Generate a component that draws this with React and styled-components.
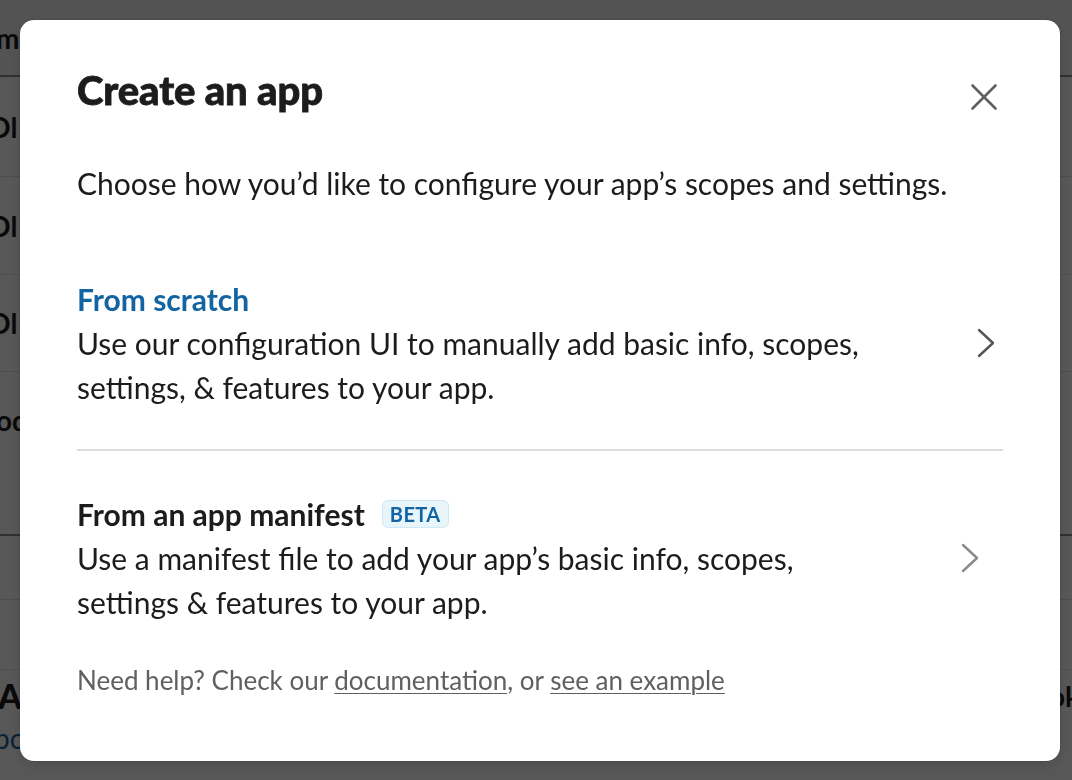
import React from "react";
import styled, { createGlobalStyle } from "styled-components";

const Global = createGlobalStyle`
  html, body { margin: 0; padding: 0; }
  body {
    font-family: Lato, "Noto Sans", sans-serif;
    background: #ffffff;
    overflow: hidden;
  }
  * { box-sizing: border-box; }
`;

/* ---------- background page ---------- */
const Page = styled.div`
  width: 1072px;
  height: 780px;
  display: flex;
  flex-direction: column;
  background: #ffffff;
  color: #1d1c1d;
`;

const PageRow = styled.div`
  height: ${(p) => p.$h}px;
  flex: none;
  display: flex;
  justify-content: space-between;
  align-items: ${(p) => p.$align || "center"};
  background: ${(p) => p.$bg || "#ffffff"};
  border-bottom: ${(p) => (p.$line ? `${p.$lineW || 1}px solid ${p.$line}` : "none")};
  overflow: hidden;
`;

const Frag = styled.span`
  font-size: ${(p) => p.$size || 26}px;
  font-weight: ${(p) => p.$w || 700};
  color: ${(p) => p.$color || "#1d1c1d"};
  margin-left: ${(p) => p.$ml || 0}px;
  margin-right: ${(p) => p.$mr || 0}px;
  padding-top: ${(p) => p.$pt || 0}px;
  white-space: nowrap;
  line-height: 1;
`;

/* ---------- overlay + modal ---------- */
const Overlay = styled.div`
  position: fixed;
  inset: 0;
  background: rgba(0, 0, 0, 0.66);
  display: flex;
  padding: 20px 12px 19px 20px;
`;

const Modal = styled.div`
  flex: 1;
  background: #ffffff;
  border-radius: 14px;
  padding: 46px 57px 0;
  display: flex;
  flex-direction: column;
  color: #1d1c1d;
  box-shadow: 0 0 0 1px rgba(0, 0, 0, 0.08), 0 4px 12px rgba(0, 0, 0, 0.12);
`;

const Header = styled.div`
  display: flex;
  align-items: flex-start;
  justify-content: space-between;
`;

const Title = styled.h1`
  margin: 0;
  font-size: 40px;
  line-height: 48px;
  font-weight: 900;
  letter-spacing: -0.1px;
  -webkit-text-stroke: 0.8px #1d1c1d;
`;

const CloseButton = styled.button`
  border: none;
  background: transparent;
  padding: 0;
  margin: 13px 1px 0 0;
  width: 36px;
  height: 36px;
  display: flex;
  align-items: center;
  justify-content: center;
  cursor: pointer;
`;

const Intro = styled.p`
  margin: 46px 0 0;
  font-size: 30px;
  line-height: 44px;
  font-weight: 400;
`;

const Option = styled.div`
  display: flex;
  align-items: center;
  justify-content: space-between;
  padding: ${(p) => p.$pad};
  border-bottom: ${(p) => (p.$divider ? "2px solid #dddddd" : "none")};
  cursor: pointer;
`;

const OptionText = styled.div`
  display: flex;
  flex-direction: column;
`;

const OptionTitle = styled.div`
  display: flex;
  align-items: center;
  gap: 17px;
  font-size: 30px;
  line-height: 44px;
  font-weight: 700;
  color: ${(p) => p.$color};
`;

const OptionDesc = styled.div`
  font-size: 30px;
  line-height: 44px;
  font-weight: 400;
  max-width: 800px;
`;

const Badge = styled.span`
  display: inline-flex;
  align-items: center;
  height: 28px;
  padding: 0 7px;
  border-radius: 6px;
  background: #e8f5fa;
  border: 1px solid #d0e8f5;
  color: #1264a3;
  font-size: 20px;
  font-weight: 700;
  letter-spacing: 0.4px;
`;

const Chevron = styled.svg`
  flex: none;
  margin-right: ${(p) => p.$mr}px;
`;

const Footer = styled.p`
  margin: 0;
  padding-top: ${(p) => p.$pt}px;
  font-size: 26px;
  line-height: 36px;
  color: #616061;
`;

const FooterLink = styled.a`
  color: #616061;
  text-decoration: underline;
  text-underline-offset: 3px;
  text-decoration-thickness: 1px;
`;

function ChevronIcon({ color, mr }) {
  return (
    <Chevron $mr={mr} width="20" height="30" viewBox="0 0 20 30">
      <polyline
        points="3,2 17,15 3,28"
        fill="none"
        stroke={color}
        strokeWidth="2.4"
        strokeLinecap="round"
        strokeLinejoin="round"
      />
    </Chevron>
  );
}

export default function App() {
  return (
    <>
      <Global />
      <Page>
        <PageRow $h={77} $bg="#f4f4f4" $line="#8a8a8a" $lineW={2}>
          <Frag $ml={-4} $size={28}>m</Frag>
        </PageRow>
        <PageRow $h={100} $line="#e2e2e2">
          <Frag $ml={-12} $size={28}>Ol</Frag>
        </PageRow>
        <PageRow $h={98} $line="#e2e2e2">
          <Frag $ml={-12} $size={28}>Ol</Frag>
        </PageRow>
        <PageRow $h={97} $line="#e2e2e2">
          <Frag $ml={-12} $size={28}>Ol</Frag>
        </PageRow>
        <PageRow $h={164} $align="flex-start" $line="#8a8a8a" $lineW={2}>
          <Frag $ml={-4} $size={28} $pt={34}>od</Frag>
        </PageRow>
        <PageRow $h={64} $line="#e2e2e2" />
        <PageRow $h={70} $line="#e2e2e2" />
        <PageRow $h={52}>
          <Frag $ml={-2} $size={34} $w={900}>Ap</Frag>
          <Frag $mr={-8} $size={28}>ok</Frag>
        </PageRow>
        <PageRow $h={56} $align="flex-start">
          <Frag $ml={-6} $size={28} $w={400} $color="#1264a3" $pt={2}>bo</Frag>
        </PageRow>
      </Page>

      <Overlay>
        <Modal role="dialog" aria-label="Create an app">
          <Header>
            <Title>Create an app</Title>
            <CloseButton aria-label="Close">
              <svg width="28" height="28" viewBox="0 0 28 28">
                <path
                  d="M2.5 2.5 L25.5 25.5 M25.5 2.5 L2.5 25.5"
                  stroke="#616061"
                  strokeWidth="2.6"
                  strokeLinecap="round"
                />
              </svg>
            </CloseButton>
          </Header>

          <Intro>Choose how you’d like to configure your app’s scopes and settings.</Intro>

          <Option $pad="72px 0 40px" $divider>
            <OptionText>
              <OptionTitle $color="#1264a3">From scratch</OptionTitle>
              <OptionDesc>
                Use our configuration UI to manually add basic info, scopes, settings, &amp; features
                to your app.
              </OptionDesc>
            </OptionText>
            <ChevronIcon color="#555555" mr={7} />
          </Option>

          <Option $pad="41px 0 0">
            <OptionText>
              <OptionTitle $color="#1d1c1d">
                From an app manifest <Badge>BETA</Badge>
              </OptionTitle>
              <OptionDesc>
                Use a manifest file to add your app’s basic info, scopes, settings &amp; features
                to your app.
              </OptionDesc>
            </OptionText>
            <ChevronIcon color="#8a8a8a" mr={23} />
          </Option>

          <Footer $pt={38}>
            Need help? Check our <FooterLink href="#">documentation</FooterLink>, or{" "}
            <FooterLink href="#">see an example</FooterLink>
          </Footer>
        </Modal>
      </Overlay>
    </>
  );
}
